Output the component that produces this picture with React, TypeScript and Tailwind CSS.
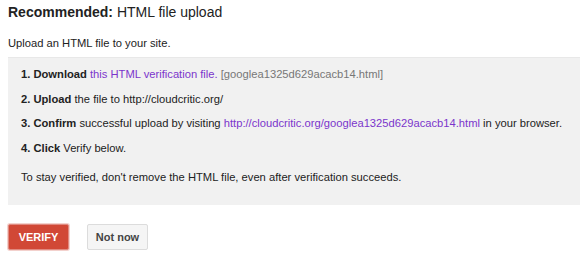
export default function App() {
  return (
    <div className="min-h-[265px] w-[580px] overflow-hidden bg-white font-['Liberation_Sans',Arial,sans-serif] text-[#222]">
      <div className="pl-2">
        <h2 className="pt-[2px] text-[14px] leading-[20px]">
          <span className="font-bold">Recommended:</span> HTML file upload
        </h2>
        <p className="mt-[13px] text-[11.2px] leading-[16px]">Upload an HTML file to your site.</p>

        <div className="mt-[6px] border-t border-[#e8e8e8] bg-[#f1f1f1] pb-[20px] pl-[13px] pt-[8px] text-[11.2px] leading-[16px]">
          <ol className="flex flex-col gap-[8.5px]">
            <li>
              <b>1. Download</b> <span className="text-[#7b35cc]">this HTML verification file.</span>{" "}
              <span className="text-[#777]">[googlea1325d629acacb14.html]</span>
            </li>
            <li>
              <b>2. Upload</b> the file to http://cloudcritic.org/
            </li>
            <li>
              <b>3. Confirm</b> successful upload by visiting{" "}
              <span className="text-[#7b35cc]">http://cloudcritic.org/googlea1325d629acacb14.html</span> in your browser.
            </li>
            <li>
              <b>4. Click</b> Verify below.
            </li>
          </ol>
          <p className="mt-[13.5px]">To stay verified, don't remove the HTML file, even after verification succeeds.</p>
        </div>

        <div className="mt-[19px] flex gap-[18px]">
          <button className="h-[26px] w-[61px] rounded-[2px] border border-[#e08a80] bg-[#d14836] text-[11px] font-bold text-white shadow-[0_0_0_1px_rgba(209,72,54,0.25)]">
            VERIFY
          </button>
          <button className="h-[26px] w-[61px] rounded-[2px] border border-[#dcdcdc] bg-[#f5f5f5] text-[11px] font-bold text-[#444]">
            Not now
          </button>
        </div>
      </div>
    </div>
  );
}
